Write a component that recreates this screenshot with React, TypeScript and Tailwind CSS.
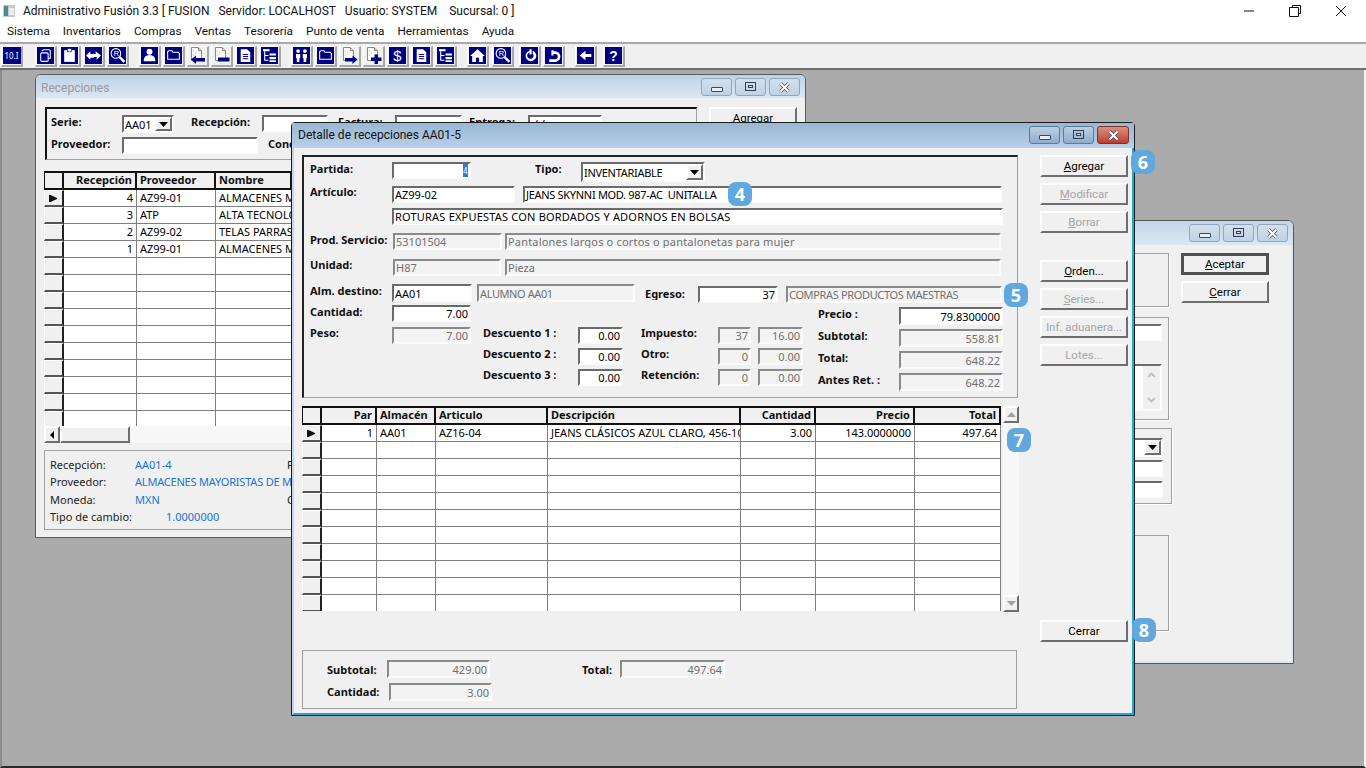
import type { ReactNode } from "react";

const sunken = "border-2 border-t-[#6b6b6b] border-l-[#6b6b6b] border-r-[#fbfbfb] border-b-[#fbfbfb]";
const sunkenOff = "border-2 border-t-[#8a8a8a] border-l-[#8a8a8a] border-r-[#fbfbfb] border-b-[#fbfbfb]";
const raised = "border-2 border-t-[#fdfdfd] border-l-[#fdfdfd] border-r-[#6e6e6e] border-b-[#6e6e6e]";

function Field({ w, h = "h-[17px]", text, right, off, cls = "", children }: { w: string; h?: string; text?: string; right?: boolean; off?: boolean; cls?: string; children?: ReactNode }) {
  return (
    <div className={`${w} ${h} ${off ? sunkenOff : sunken} ${cls} shrink-0 flex items-center overflow-hidden whitespace-pre px-[1px] leading-[13px] ${right ? "justify-end" : ""} ${off ? "bg-[#f3f3f3] text-[#707070]" : "bg-white text-black"}`}>
      {text}
      {children}
    </div>
  );
}

function Label({ w, cls = "", children }: { w: string; cls?: string; children: ReactNode }) {
  return <div className={`${w} ${cls} shrink-0 font-bold leading-[13px] whitespace-nowrap overflow-hidden text-[#111]`}>{children}</div>;
}

function Arrow({ className = "" }: { className?: string }) {
  return (
    <svg width="9" height="5" viewBox="0 0 9 5" className={className}>
      <path d="M0 0h9L4.500 5z" fill="currentColor" />
    </svg>
  );
}

function Combo({ w, h = "h-[18px]", text, cls = "" }: { w: string; h?: string; text: string; cls?: string }) {
  return (
    <div className={`${w} ${h} ${sunken} shrink-0 bg-white flex items-center justify-between overflow-hidden pl-[1px]`}>
      <span className={`${cls} leading-[13px] mt-[1px]`}>{text}</span>
      <div className={`${raised} w-[17px] h-full bg-[#f0f0f0] flex items-center justify-center`}>
        <Arrow />
      </div>
    </div>
  );
}

function Btn({ text, u, off, h = "h-[22px]", cls = "mt-0", strong }: { text: string; u?: string; off?: boolean; h?: string; cls?: string; strong?: boolean }) {
  return (
    <div className={`${h} ${cls} w-[88px] shrink-0 ${strong ? "border-[3px] border-[#505050]" : raised} bg-[#f0f0f0] flex items-center justify-center leading-[14px] text-[11.500px] font-['Roboto',sans-serif] whitespace-pre ${off ? "text-[#a6a6a6]" : "text-black"}`}>
      {u && <span className="underline">{u}</span>}
      {text}
    </div>
  );
}

function WinControls({ active }: { active?: boolean }) {
  const base = `w-[31px] h-[18px] rounded-[3px] border flex items-center justify-center ${active ? "border-[#5d7c9c] bg-gradient-to-b from-[#bcd0e4] to-[#8fadcb]" : "border-[#8ea6bf] bg-gradient-to-b from-[#d3e0ec] to-[#bfd2e5]"}`;
  return (
    <div className="ml-auto flex gap-[3px] pt-[3px] pr-[5px]">
      <div className={base}>
        <div className="w-[12px] h-[5px] mt-[4px] rounded-[1px] bg-[#e8eef5] border border-[#3b4a5a]" />
      </div>
      <div className={base}>
        <div className="w-[11px] h-[9px] mb-[1px] bg-transparent border border-[#33414f] flex items-center justify-center">
          <div className="w-[5px] h-[3px] border border-[#33414f] bg-[#dbe6f0]" />
        </div>
      </div>
      <div className={active ? "w-[32px] h-[18px] rounded-[3px] border border-[#7c3228] bg-gradient-to-b from-[#dd8e80] to-[#bf3b2a] flex items-center justify-center" : base}>
        <svg width="13" height="11" viewBox="0 0 13 11">
          <path d="M2.500 1.500l8 8M10.500 1.500l-8 8" stroke="#3f4a55" strokeWidth="3.400" />
          <path d="M2.500 1.500l8 8M10.500 1.500l-8 8" stroke="#fff" strokeWidth="2" />
        </svg>
      </div>
    </div>
  );
}

function RowMark({ on }: { on?: boolean }) {
  return (
    <div className="w-[20px] h-full shrink-0 bg-[#f0f0f0] border-t border-l border-t-white border-l-white border-r-2 border-b-2 border-r-[#222] border-b-[#555] flex items-center justify-center">
      {on && (
        <svg width="9" height="7" viewBox="0 0 9 7">
          <path d="M0 0h1.500L8 3v1L1.500 7H0z" fill="#111" />
        </svg>
      )}
    </div>
  );
}

type Col = { w: string; right?: boolean };

function GridHead({ cols, heads }: { cols: Col[]; heads: string[] }) {
  return (
    <div className="flex h-[19px] border-t-2 border-[#111] bg-[#f0f0f0] font-bold text-[#111]">
      <div className="w-[20px] shrink-0 border-r-2 border-b-2 border-l border-[#111]" />
      {cols.map((c, i) => (
        <div key={i} className={`${c.w} shrink-0 border-r-2 border-b-2 border-[#111] px-[3px] leading-[14px] whitespace-nowrap overflow-hidden ${c.right ? "text-right" : ""}`}>
          {heads[i]}
        </div>
      ))}
    </div>
  );
}

function GridRows({ cols, rows, count }: { cols: Col[]; rows: string[][]; count: number }) {
  return (
    <>
      {Array.from({ length: count }).map((_, r) => (
        <div key={r} className="flex h-[17px] bg-white">
          <RowMark on={r === 0} />
          {cols.map((c, i) => (
            <div key={i} className={`${c.w} shrink-0 border-r border-b border-[#7f7f7f] px-[3px] leading-[15px] whitespace-nowrap overflow-hidden ${c.right ? "text-right" : ""}`}>
              {rows[r]?.[i] ?? ""}
            </div>
          ))}
        </div>
      ))}
    </>
  );
}

function Badge({ n, pos }: { n: number; pos: string }) {
  return (
    <div className={`absolute ${pos} w-[24px] h-[24px] rounded-[8px] bg-[#60a8dd] flex items-center justify-center text-white font-bold text-[18px] leading-none font-['Open_Sans',sans-serif]`}>
      {n}
    </div>
  );
}

// toolbar glyphs, 16x15 on navy
function Glyph({ name }: { name: string }) {
  const w = "#fff";
  const pageIcon = name === "docLeft" || name === "docMinus" || name === "docRight" || name === "docPlus";
  if (pageIcon) {
    return (
      <svg width="17" height="17" viewBox="0 0 17 17">
        <path d="M2.500 .5h7l3 3v10h-10z" fill="#fff" stroke="#8a8a8a" />
        <path d="M9.500 .5v3h3" fill="#d8d8d8" stroke="#8a8a8a" />
        <path d="M4 4h1M6 6h1M4 8h1" stroke="#b5b5b5" />
        {name === "docLeft" && <path d="M2 12.500l5-4v2.500h9v3.500H7V17z" fill="#000080" />}
        {name === "docMinus" && <path d="M5 10.500h11.500v4H5z" fill="#000080" />}
        {name === "docRight" && <path d="M16.500 12.500l-5-4v2.500H4v3.500h7.500V17z" fill="#000080" />}
        {name === "docPlus" && <path d="M9.500 7.500h3.500v3h3.500v3.500H13v3H9.500v-3H6v-3.500h3.500z" fill="#000080" />}
      </svg>
    );
  }
  return (
    <svg width="17" height="17" viewBox="0 0 16 16" className="bg-[#000080]">
      {name === "copy" && (
        <g fill="none" stroke={w}>
          <path d="M4.500 3.500l2-1h5l1 1v7h-2" />
          <rect x="3.500" y="5.500" width="7" height="8" rx="1" />
        </g>
      )}
      {name === "clip" && (
        <>
          <rect x="3" y="3" width="10" height="11" fill={w} />
          <rect x="6" y="1.500" width="4" height="3" fill={w} stroke="#000080" strokeWidth=".6" />
        </>
      )}
      {name === "swap" && <path d="M1 8l4-4v2.500h2.500V6l1 .5H10V4l5 4-4 4V9.500H8.500L8 10H5v2z" fill={w} />}
      {name === "find" && (
        <>
          <circle cx="6.500" cy="6" r="4.500" fill="none" stroke={w} />
          <text x="4.500" y="8.500" fontSize="7" fill={w} fontFamily="Liberation Sans">R</text>
          <path d="M10 9.500l4.500 4.500" stroke={w} strokeWidth="2.200" />
        </>
      )}
      {name === "person" && (
        <>
          <circle cx="8" cy="4.500" r="2.800" fill={w} />
          <path d="M2.500 13.500q0-6 5.500-6t5.500 6z" fill={w} />
        </>
      )}
      {name === "folder" && <path d="M2.500 11.500v-7l1-1h3l1 1.500h5l1 1v5.500z" fill="none" stroke={w} />}
      {name === "doc" && (
        <>
          <path d="M3.500 2h6l3 3v9h-9z" fill={w} />
          <path d="M5.500 7h5M5.500 9h5M5.500 11h5" stroke="#000080" />
        </>
      )}
      {name === "tree" && (
        <>
          <rect x="2" y="2" width="6" height="2" fill={w} />
          <path d="M3.500 4v8.500H7M3.500 8H7" stroke={w} fill="none" />
          <path d="M8 6h6v2H8zM8 9.500h6v2H8zM8 12.500h6V14H8z" fill={w} />
        </>
      )}
      {name === "people" && (
        <>
          <circle cx="4.800" cy="3.800" r="1.800" fill={w} />
          <circle cx="11.200" cy="3.800" r="1.800" fill={w} />
          <path d="M2.800 6.500h4v4h-.8v3.500H3.600v-3.500h-.8zM9.200 6.500h4v4h-.8v3.500H10v-3.500h-.8z" fill={w} />
        </>
      )}
      {name === "dollar" && <text x="8" y="13" fontSize="14" textAnchor="middle" fill={w} fontFamily="Liberation Sans">$</text>}
      {name === "home" && <path d="M8 2l7 6.500h-2V14H9.500v-4h-3v4H3V8.500H1z" fill={w} />}
      {name === "redo" && <path d="M8 2h2v5H8V5.200a3 3 0 1 0 3 .8V3.600A5 5 0 1 1 8 3.500z" fill={w} />}
      {name === "undo" && <path d="M7 2v5h2V5.500h1.500a2.500 2.500 0 0 1 0 5H5V13h5.500a5 5 0 0 0 0-10H9V2z" fill={w} transform="translate(-1 1)" />}
      {name === "back" && <path d="M2.500 8L8 3.500V6.500h5.500v3H8v3z" fill={w} />}
      {name === "help" && <text x="8" y="13" fontSize="13" fontWeight="bold" textAnchor="middle" fill={w} fontFamily="Liberation Sans">?</text>}
    </svg>
  );
}

function Tool({ name, cls = "ml-0" }: { name: string; cls?: string }) {
  return (
    <div className={`${cls} w-[22px] h-[21px] mr-[2px] shrink-0 border-t border-l border-white border-r-2 border-b-2 border-r-[#a8a8a8] border-b-[#a8a8a8] flex items-center justify-center`}>
      {name === "ten" ? (
        <div className="w-[18px] h-[17px] bg-[#000080] text-white text-[8px] leading-[17px] text-center">10.I</div>
      ) : (
        <Glyph name={name} />
      )}
    </div>
  );
}

const tools = [
  { n: "ten", c: "ml-0" },
  { n: "copy", c: "ml-[10px]" }, { n: "clip" }, { n: "swap" }, { n: "find" },
  { n: "person", c: "ml-[8px]" }, { n: "folder" }, { n: "docLeft" }, { n: "docMinus" }, { n: "doc" }, { n: "tree" },
  { n: "people", c: "ml-[8px]" }, { n: "folder" }, { n: "docRight" }, { n: "docPlus" }, { n: "dollar" }, { n: "doc" }, { n: "tree" },
  { n: "home", c: "ml-[8px]" }, { n: "find", c: "ml-[1px]" },
  { n: "redo", c: "ml-[3px]" }, { n: "undo" },
  { n: "back", c: "ml-[8px]" },
  { n: "help", c: "ml-[4px]" },
];

const menus = ["Sistema", "Inventarios", "Compras", "Ventas", "Tesorería", "Punto de venta", "Herramientas", "Ayuda"];

const listCols: Col[] = [
  { w: "w-[73px]", right: true },
  { w: "w-[79px]" },
  { w: "w-[76px]" },
  { w: "w-[300px]" },
];
const listRows = [
  ["4", "AZ99-01", "ALMACENES MAYORISTAS DE MEXICO"],
  ["3", "ATP", "ALTA TECNOLOGIA EN PRENDAS"],
  ["2", "AZ99-02", "TELAS PARRAS"],
  ["1", "AZ99-01", "ALMACENES MAYORISTAS DE MEXICO"],
];

const detailCols: Col[] = [
  { w: "w-[55px]", right: true },
  { w: "w-[59px]" },
  { w: "w-[112px]" },
  { w: "w-[193px]" },
  { w: "w-[75px]", right: true },
  { w: "w-[99px]", right: true },
  { w: "w-[86px]", right: true },
];

function InfoRow({ label, value, valueCls = "w-[152px]", labelW = "w-[85px]", side }: { label: string; value: string; valueCls?: string; labelW?: string; side?: string }) {
  return (
    <div className="flex h-[17.500px] items-center whitespace-nowrap">
      <div className={`${labelW} shrink-0 text-[#222]`}>{label}</div>
      <div className={`${valueCls} shrink-0 overflow-hidden text-[#1a73d0]`}>{value}</div>
      {side && <div className="w-[4px] overflow-hidden text-[#222]">{side}</div>}
    </div>
  );
}

function RecepcionesWindow() {
  return (
    <div className="absolute left-[33px] top-[4px] w-[771px] h-[464px] rounded-t-[6px] border border-[#5a5a5a] bg-[#f0f0f0] overflow-hidden flex flex-col">
      <div className="h-[23px] shrink-0 flex bg-gradient-to-b from-[#bed2e6] to-[#dbe8f4] pl-[5px]">
        <span className="text-[#9a9a9a] text-[12px] font-['Roboto',sans-serif] leading-[26px]">Recepciones</span>
        <WinControls />
      </div>
      <div className="pl-[8px] pt-[9px] flex flex-col">
        <div className="flex ml-[1px]">
          <div className="w-[652px] h-[53px] shrink-0 border-t-2 border-l-2 border-[#111] border-r border-b border-r-[#a0a0a0] border-b-[#a0a0a0] pt-[6px] pl-[4px]">
            <div className="flex items-start">
              <Label w="w-[71px]">Serie:</Label>
              <Combo w="w-[52px]" text="AA01" />
              <div className="ml-[17px]"><Label w="w-[71px]">Recepción:</Label></div>
              <Field w="w-[66px]" />
              <div className="ml-[10px]"><Label w="w-[57px]">Factura:</Label></div>
              <Field w="w-[67px]" />
              <div className="ml-[7px]"><Label w="w-[59px]">Entrega:</Label></div>
              <Field w="w-[74px]" text=" / /" />
            </div>
            <div className="flex items-start mt-[4px]">
              <Label w="w-[71px]">Proveedor:</Label>
              <Field w="w-[136px]" />
              <div className="ml-[10px]"><Label w="w-[23px]">Concepto:</Label></div>
            </div>
          </div>
          <Btn text="gregar" u="A" cls="ml-[12px]" />
        </div>
        <div className="mt-[11px] h-[255px] overflow-hidden shrink-0 w-[650px]">
          <GridHead cols={listCols} heads={["Recepción", "Proveedor", "Nombre", ""]} />
          <GridRows cols={listCols} rows={listRows} count={14} />
        </div>
        <div className="flex h-[17px] w-[650px] shrink-0 bg-[#f7f7f7]">
          <div className={`${raised} w-[16px] bg-[#f0f0f0] flex items-center justify-center`}>
            <div className="w-0 h-0 border-y-[4px] border-y-transparent border-r-[4px] border-r-black" />
          </div>
          <div className={`${raised} w-[70px] bg-[#f0f0f0]`} />
        </div>
        <div className="mt-[7px] w-[650px] h-[80px] shrink-0 border border-[#a0a0a0] pt-[5px] pl-[5px]">
          <InfoRow label="Recepción:" value="AA01-4" side="Fecha:" />
          <InfoRow label="Proveedor:" value="ALMACENES MAYORISTAS DE MEXICO" valueCls="w-[156px] tracking-[-0.2px]" />
          <InfoRow label="Moneda:" value="MXN" side="Cond" />
          <InfoRow label="Tipo de cambio:" value="1.0000000" labelW="w-[116px]" valueCls="w-[121px]" />
        </div>
      </div>
    </div>
  );
}

function FondoWindow() {
  const box = "w-[312px] shrink-0 border border-[#a0a0a0] shadow-[1px_1px_0_#fff]";
  return (
    <div className="absolute left-[848px] top-[150px] w-[444px] h-[444px] rounded-t-[6px] border border-[#555] bg-[#f0f0f0] flex flex-col overflow-hidden">
      <div className="h-[24px] shrink-0 flex bg-gradient-to-b from-[#c3d5e7] to-[#dbe8f4]">
        <WinControls />
      </div>
      <div className="flex-1 flex pl-[4px] pt-[8px] border-x-2 border-b-2 border-[#dfe7f0]">
        <div className="w-[312px] shrink-0 flex flex-col">
          <div className={`${box} h-[54px]`} />
          <div className={`${box} mt-[10px] h-[103px] pt-[6px] pr-[6px] flex flex-col items-end`}>
            <Field w="w-[100px]" />
            <div className={`${sunken} mt-[23px] w-[100px] h-[47px] flex bg-white`}>
              <div className="ml-auto w-[17px] bg-[#f0f0f0] flex flex-col items-center justify-between py-[6px] text-[#c4c4c4]">
                <svg width="9" height="6" viewBox="0 0 9 6"><path d="M1 5l3.500-3.500L8 5" fill="none" stroke="currentColor" strokeWidth="2" /></svg>
                <svg width="9" height="6" viewBox="0 0 9 6"><path d="M1 1l3.500 3.500L8 1" fill="none" stroke="currentColor" strokeWidth="2" /></svg>
              </div>
            </div>
          </div>
          <div className="w-[315px] shrink-0 border border-[#a0a0a0] shadow-[1px_1px_0_#fff] mt-[8px] h-[76px] pt-[9px] pr-[8px] flex flex-col items-end">
            <Combo w="w-[100px]" h="h-[19px]" text="" />
            <div className="mt-[3px]"><Field w="w-[100px]" /></div>
            <div className="mt-[4px]"><Field w="w-[100px]" /></div>
          </div>
          <div className={`${box} mt-[31px] h-[96px]`} />
        </div>
        <div className="ml-[12px] flex flex-col">
          <Btn text="ceptar" u="A" strong />
          <Btn text="errar" u="C" cls="mt-[6px]" />
        </div>
      </div>
    </div>
  );
}

function DetalleWindow() {
  return (
    <div className="absolute left-[289px] top-[52px] w-[844px] h-[594px] border border-[#1c1c1c] rounded-t-[4px] bg-[#f0f0f0] flex flex-col">
      <div className="h-[25px] shrink-0 flex bg-gradient-to-b from-[#99b6d3] to-[#b9d1ea] pl-[6px]">
        <span className="text-[#111] text-[12px] font-['Roboto',sans-serif] leading-[25px]">Detalle de recepciones AA01-5</span>
        <WinControls active />
      </div>
      <div className="flex-1 flex pl-[8px] border-l-2 border-l-[#c4d6e8] border-r-2 border-b-2 border-r-[#1ca9dc] border-b-[#1ca9dc]">
        <div className="w-[717px] shrink-0 pt-[7px] flex flex-col">
          <div className="w-[716px] h-[243px] shrink-0 border-t-2 border-l-2 border-[#222] border-r border-b border-r-[#a0a0a0] border-b-[#a0a0a0] pt-[5px] pl-[6px]">
            <div className="flex items-start h-[20px]">
              <Label w="w-[82px]">Partida:</Label>
              <Field w="w-[79px]" right>
                <span className="bg-[#2f7bd6] text-white text-[8px] leading-[13px] w-[5px] overflow-hidden">4</span>
              </Field>
              <div className="ml-[64px]"><Label w="w-[46px]">Tipo:</Label></div>
              <Combo w="w-[124px]" h="h-[20px]" text="INVENTARIABLE" cls="tracking-[-0.3px]" />
            </div>
            <div className="flex items-start mt-[4px]">
              <Label w="w-[82px]" cls="-mt-[1px]">Artículo:</Label>
              <Field w="w-[123px]" text="AZ99-02" />
              <div className="ml-[8px]"><Field w="w-[479px]" text="JEANS SKYNNI MOD. 987-AC  UNITALLA" cls="tracking-[-0.3px]" /></div>
            </div>
            <div className="flex mt-[5px] ml-[82px]">
              <Field w="w-[611px]" text="ROTURAS EXPUESTAS CON BORDADOS Y ADORNOS EN BOLSAS" cls="tracking-[0.2px]" />
            </div>
            <div className="flex items-start mt-[8px]">
              <Label w="w-[83px]">Prod. Servicio:</Label>
              <Field w="w-[109px]" text="53101504" off />
              <div className="ml-[3px]"><Field w="w-[496px]" text="Pantalones largos o cortos o pantalonetas para mujer" off cls="tracking-[0.18px]" /></div>
            </div>
            <div className="flex items-start mt-[9px]">
              <Label w="w-[83px]" cls="-mt-[1px]">Unidad:</Label>
              <Field w="w-[108px]" text="H87" off />
              <div className="ml-[4px]"><Field w="w-[496px]" text="Pieza" off /></div>
            </div>
            <div className="flex items-start mt-[8px]">
              <Label w="w-[82px]">Alm. destino:</Label>
              <Field w="w-[80px]" h="h-[18px]" text="AA01" />
              <div className="ml-[5px]"><Field w="w-[158px]" h="h-[18px]" text="ALUMNO AA01" off cls="tracking-[-0.4px]" /></div>
              <div className="ml-[10px] mt-[3px]"><Label w="w-[53px]">Egreso:</Label></div>
              <div className="mt-[2px]"><Field w="w-[80px]" text="37" right /></div>
              <div className="ml-[8px] mt-[2px]"><Field w="w-[216px]" text="COMPRAS PRODUCTOS MAESTRAS" off cls="tracking-[-0.35px]" /></div>
            </div>
            <div className="flex mt-[2px]">
              <div className="w-[173px] shrink-0 flex flex-col">
                <div className="flex">
                  <Label w="w-[82px]">Cantidad:</Label>
                  <Field w="w-[79px]" text="7.00" right />
                </div>
                <div className="flex mt-[5px]">
                  <Label w="w-[82px]" cls="-mt-[1px]">Peso:</Label>
                  <Field w="w-[79px]" text="7.00" right off />
                </div>
              </div>
              <div className="w-[158px] shrink-0 pt-[22px] flex flex-col gap-[4px]">
                {["Descuento 1 :", "Descuento 2 :", "Descuento 3 :"].map((d) => (
                  <div key={d} className="flex">
                    <Label w="w-[95px]" cls="-mt-[1px]">{d}</Label>
                    <Field w="w-[45px]" text="0.00" right />
                  </div>
                ))}
              </div>
              <div className="w-[177px] shrink-0 pt-[22px] flex flex-col gap-[4px]">
                {[["Impuesto:", "37", "16.00"], ["Otro:", "0", "0.00"], ["Retención:", "0", "0.00"]].map(([l, a, b]) => (
                  <div key={l} className="flex">
                    <Label w="w-[77px]" cls="-mt-[1px]">{l}</Label>
                    <Field w="w-[33px]" text={a} right off />
                    <div className="ml-[7px]"><Field w="w-[45px]" text={b} right off /></div>
                  </div>
                ))}
              </div>
              <div className="pt-[2px] flex flex-col gap-[4px]">
                <div className="flex">
                  <Label w="w-[81px]">Precio :</Label>
                  <Field w="w-[104px]" h="h-[18px]" text="79.8300000" right />
                </div>
                {[["Subtotal:", "558.81"], ["Total:", "648.22"], ["Antes Ret. :", "648.22"]].map(([l, v]) => (
                  <div key={l} className="flex">
                    <Label w="w-[81px]">{l}</Label>
                    <Field w="w-[104px]" h="h-[18px]" text={v} right off />
                  </div>
                ))}
              </div>
            </div>
          </div>

          <div className="flex mt-[8px] h-[206px] shrink-0">
            <div className="w-[699px] h-[205px] overflow-hidden shrink-0">
              <GridHead cols={detailCols} heads={["Par", "Almacén", "Articulo", "Descripción", "Cantidad", "Precio", "Total"]} />
              <GridRows cols={detailCols} count={11} rows={[["1", "AA01", "AZ16-04", "JEANS CLÁSICOS AZUL CLARO, 456-10", "3.00", "143.0000000", "497.64"]]} />
            </div>
            <div className="ml-[2px] w-[16px] flex flex-col justify-between bg-[#f7f7f7]">
              <div className={`${raised} h-[17px] bg-[#f0f0f0] flex items-center justify-center text-[#a0a0a0]`}>
                <Arrow className="rotate-180" />
              </div>
              <div className={`${raised} h-[17px] bg-[#f0f0f0] flex items-center justify-center text-[#a0a0a0]`}>
                <Arrow />
              </div>
            </div>
          </div>

          <div className="mt-[38px] w-[715px] h-[59px] shrink-0 border border-[#a0a0a0] pt-[9px] pl-[24px]">
            <div className="flex">
              <Label w="w-[60px]" cls="mt-[3px]">Subtotal:</Label>
              <Field w="w-[103px]" h="h-[18px]" text="429.00" right off />
              <div className="ml-[92px]"><Label w="w-[38px]" cls="mt-[3px]">Total:</Label></div>
              <Field w="w-[105px]" h="h-[18px]" text="497.64" right off />
            </div>
            <div className="flex mt-[5px]">
              <Label w="w-[62px]" cls="mt-[2px]">Cantidad:</Label>
              <Field w="w-[103px]" h="h-[18px]" text="3.00" right off />
            </div>
          </div>
        </div>

        <div className="ml-[21px] pt-[7px] flex flex-col">
          <Btn text="gregar" u="A" />
          <Btn text="odificar" u="M" off cls="mt-[6px]" />
          <Btn text="orrar" u="B" off cls="mt-[6px]" />
          <Btn text="rden..." u="O" cls="mt-[27px]" />
          <Btn text="eries..." u="S" off cls="mt-[6px]" />
          <Btn text="Inf. aduanera..." off cls="mt-[6px]" />
          <Btn text="Lotes..." off cls="mt-[6px]" />
          <Btn text="Cerrar" cls="mt-[254px]" />
        </div>
      </div>

      <Badge n={4} pos="left-[436px] top-[59px]" />
      <Badge n={5} pos="left-[712px] top-[160px]" />
      <Badge n={6} pos="left-[839px] top-[27px]" />
      <Badge n={7} pos="left-[715px] top-[305px]" />
      <Badge n={8} pos="left-[840px] top-[495px]" />
    </div>
  );
}

export default function App() {
  return (
    <div className="w-[1366px] h-[768px] overflow-hidden flex flex-col bg-white text-black text-[11px] font-['Noto_Sans',sans-serif]">
      <div className="h-[21px] shrink-0 flex items-center text-[12px] font-['Roboto',sans-serif] text-[#111]">
        <svg width="12" height="12" viewBox="0 0 12 12" className="ml-[3px] mr-[8px]">
          <rect width="12" height="12" fill="#c9c9c9" />
          <rect x="1" y="1" width="4" height="10" fill="#4c8c8c" />
          <rect x="6" y="3" width="5" height="7" fill="#eeeeee" />
        </svg>
        <span className="whitespace-pre">Administrativo Fusión 3.3 [ FUSION   Servidor: LOCALHOST   Usuario: SYSTEM    Sucursal: 0 ]</span>
        <div className="ml-auto flex items-center">
          <svg width="12" height="12" viewBox="0 0 12 12" className="mr-[34px]"><path d="M1 6h10" stroke="#111" /></svg>
          <svg width="12" height="12" viewBox="0 0 12 12" className="mr-[34px]">
            <path d="M3.500 2.500v-2h8v8h-2M.5 2.500h9v9h-9z" fill="none" stroke="#111" />
          </svg>
          <svg width="12" height="12" viewBox="0 0 12 12" className="mr-[19px]"><path d="M1 1l10 10M11 1L1 11" stroke="#111" /></svg>
        </div>
      </div>
      <div className="h-[21px] shrink-0 flex items-center gap-[13px] pl-[7px] text-[11.800px] font-['Roboto',sans-serif] text-[#111]">
        {menus.map((m) => (
          <span key={m}>{m}</span>
        ))}
      </div>
      <div className="h-[28px] shrink-0 flex items-center pl-[1px] bg-[#f0f0f0] border-t-2 border-t-[#a9a9a9] border-b-2 border-b-[#6e6e6e]">
        {tools.map((t, i) => (
          <Tool key={i} name={t.n} cls={t.c} />
        ))}
      </div>
      <div className="relative flex-1 bg-[#ababab] border-l-2 border-l-[#8c8c8c] border-r-2 border-r-[#f5f5f5] border-b-2 border-b-[#2b2b2b] overflow-hidden">
        <RecepcionesWindow />
        <FondoWindow />
        <DetalleWindow />
      </div>
    </div>
  );
}
